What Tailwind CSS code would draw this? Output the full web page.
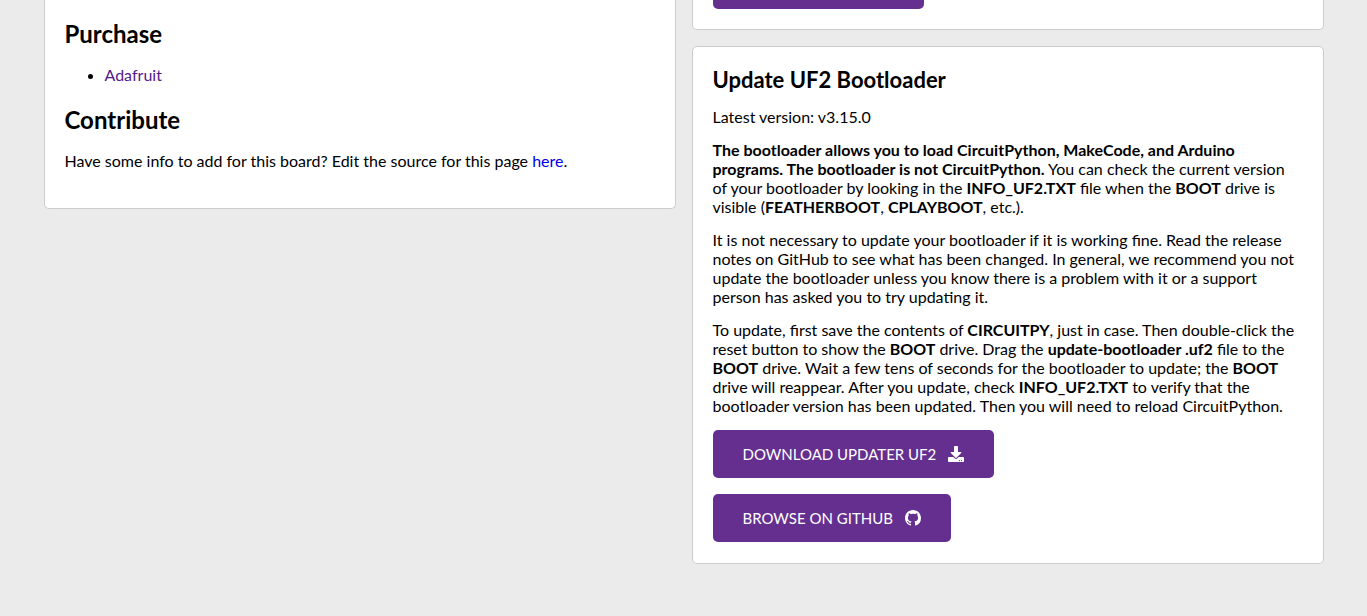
<!DOCTYPE html>
<html lang="en">
<head>
<meta charset="utf-8">
<meta name="viewport" content="width=device-width, initial-scale=1">
<title>CircuitPython Downloads</title>
<script src="https://cdn.jsdelivr.net/npm/@tailwindcss/browser@4"></script>
</head>
<body class="min-h-screen bg-[#ebebeb] font-['Lato',sans-serif] text-[16px] leading-[19px] text-black">
<main class="mx-auto grid max-w-[1280px] grid-cols-2 items-start gap-4 pb-[52px]">
  <section class="rounded-b-[5px] border-x border-b border-[#ccc] bg-white px-5 pt-5 pb-[38px]">
    <h2 class="text-[24px] leading-[28px] font-bold">Purchase</h2>
    <ul class="mt-[17px] list-disc pl-10">
      <li><a href="#adafruit" class="text-[#551a8b]">Adafruit</a></li>
    </ul>
    <h2 class="mt-[22px] text-[24px] leading-[28px] font-bold">Contribute</h2>
    <p class="mt-[17px]">Have some info to add for this board? Edit the source for this page <a href="#edit" class="text-[#0000ee]">here</a>.</p>
  </section>
  <div class="flex flex-col gap-4">
    <section class="rounded-b-[5px] border-x border-b border-[#ccc] bg-white px-5 pb-5">
      <a href="#download" aria-label="Download" class="block h-[9px] w-[211px] rounded-b-[5px] bg-[#652f8f]"></a>
    </section>
    <section class="rounded-[5px] border border-[#ccc] bg-white px-5 pt-5 pb-[21px]">
      <h3 class="text-[22px] leading-[26px] font-bold">Update UF2 Bootloader</h3>
      <p class="mt-[14px]">Latest version: v3.15.0</p>
      <p class="mt-[14px]"><b>The bootloader allows you to load CircuitPython, MakeCode, and Arduino programs. The bootloader is not CircuitPython.</b> You can check the current version of your bootloader by looking in the <b>INFO_UF2.TXT</b> file when the <b>BOOT</b> drive is visible (<b>FEATHERBOOT</b>, <b>CPLAYBOOT</b>, etc.).</p>
      <p class="mt-[14px]">It is not necessary to update your bootloader if it is working fine. Read the release notes on GitHub to see what has been changed. In general, we recommend you not update the bootloader unless you know there is a problem with it or a support person has asked you to try updating it.</p>
      <p class="mt-[14px]">To update, first save the contents of <b>CIRCUITPY</b>, just in case. Then double-click the reset button to show the <b>BOOT</b> drive. Drag the <b>update-bootloader .uf2</b> file to the <b>BOOT</b> drive. Wait a few tens of seconds for the bootloader to update; the <b>BOOT</b> drive will reappear. After you update, check <b>INFO_UF2.TXT</b> to verify that the bootloader version has been updated. Then you will need to reload CircuitPython.</p>
      <div class="mt-[15px] flex flex-col items-start gap-4">
        <a href="#updater" class="flex h-12 items-center gap-3 rounded-[5px] bg-[#652f8f] px-[30px] text-[15px] text-white">DOWNLOAD UPDATER UF2
          <svg class="size-4" viewBox="0 0 512 512" fill="currentColor" aria-hidden="true"><path d="M216 0h80c13.300 0 24 10.700 24 24v168h87.700c17.800 0 26.700 21.500 14.100 34.100L269.700 378.300c-7.500 7.500-19.800 7.500-27.300 0L90.100 226.100c-12.600-12.600-3.700-34.100 14.100-34.100H192V24c0-13.300 10.700-24 24-24zm296 376v112c0 13.300-10.700 24-24 24H24c-13.300 0-24-10.700-24-24V376c0-13.300 10.700-24 24-24h146.700l49 49c20.100 20.100 52.500 20.100 72.600 0l49-49H488c13.300 0 24 10.700 24 24zm-124 88c0-11-9-20-20-20s-20 9-20 20 9 20 20 20 20-9 20-20zm64 0c0-11-9-20-20-20s-20 9-20 20 9 20 20 20 20-9 20-20z"/></svg></a>
        <a href="#github" class="flex h-12 items-center gap-3 rounded-[5px] bg-[#652f8f] px-[30px] text-[15px] text-white">BROWSE ON GITHUB
          <svg class="size-4" viewBox="0 0 16 16" fill="currentColor" aria-hidden="true"><path d="M8 0C3.580 0 0 3.580 0 8c0 3.540 2.290 6.530 5.470 7.590.4.070.55-.17.55-.38 0-.19-.01-.82-.01-1.490-2.010.37-2.530-.49-2.690-.94-.09-.23-.48-.94-.82-1.130-.28-.15-.68-.52-.01-.53.63-.01 1.080.58 1.230.82.72 1.210 1.870.87 2.330.66.07-.52.28-.87.51-1.070-1.780-.2-3.640-.89-3.640-3.950 0-.87.31-1.590.82-2.150-.08-.2-.36-1.020.08-2.120 0 0 .67-.21 2.200.82.64-.18 1.320-.27 2-.27s1.360.09 2 .27c1.530-1.040 2.200-.82 2.200-.82.44 1.100.16 1.920.08 2.120.51.56.82 1.270.82 2.150 0 3.070-1.870 3.750-3.650 3.950.29.25.54.73.54 1.480 0 1.070-.01 1.930-.01 2.200 0 .21.15.46.55.38A8.010 8.010 0 0 0 16 8c0-4.420-3.580-8-8-8z"/></svg></a>
      </div>
    </section>
  </div>
</main>
</body>
</html>
